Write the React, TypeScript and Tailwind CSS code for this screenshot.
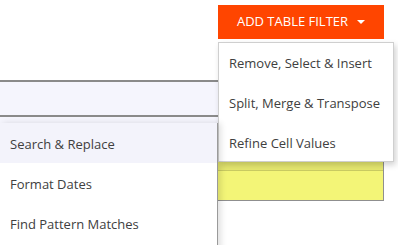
import React from 'react';

const tableMenu = ['Remove, Select & Insert', 'Split, Merge & Transpose', 'Refine Cell Values'];
const toolMenu = ['Search & Replace', 'Format Dates', 'Find Pattern Matches'];

export default function App() {
  return (
    <div className="relative w-[398px] h-[245px] overflow-hidden bg-white font-['Open_Sans',sans-serif] text-[13px] text-[#404040]">
      {/* base page */}
      <div className="h-[80px] pt-[5px] pl-[218px]">
        <button className="w-[166px] h-[34px] bg-[#ff4500] text-white text-[13px] flex items-center justify-center gap-[9px] uppercase">
          Add Table Filter
          <span className="w-0 h-0 border-l-[4px] border-r-[4px] border-t-[4px] border-l-transparent border-r-transparent border-t-white"></span>
        </button>
      </div>
      <div className="w-[384px] h-[37px] bg-[#f5f5fd] border-t-2 border-b-2 border-[#8a8a8a]"></div>
      <div className="w-[384px] h-[7px] bg-[#f5f5fd] border-b border-[#d6d6dc]"></div>
      <div className="h-[38px]"></div>
      <div className="ml-[217px] w-[167px] h-[39px] bg-[#f3f577] border-r border-b border-[#8f8f8f] flex flex-col">
        <div className="h-[9px] bg-[#e5e76f] border-b border-[#c9cb62]"></div>
      </div>

      {/* table filter dropdown */}
      <div className="absolute left-[218px] top-[42px] w-[176px] h-[120px] bg-white border border-[#cfcfcf] pt-[1px] shadow-[2px_3px_6px_rgba(0,0,0,0.18)] flex flex-col">
        {tableMenu.map((item) => (
          <div key={item} className="h-10 flex items-center pl-[10px] shrink-0">
            {item}
          </div>
        ))}
      </div>

      {/* left tool menu */}
      <div className="absolute left-0 top-[123px] w-[218px] h-[130px] bg-white border-r border-[#9a9a9a] shadow-[3px_0_6px_rgba(0,0,0,0.12)] flex flex-col">
        {toolMenu.map((item, i) => (
          <div key={item} className={`h-10 flex items-center pl-[10px] pt-[3px] shrink-0 ${i === 0 ? 'bg-[#f3f3fb]' : ''}`}>
            {item}
          </div>
        ))}
      </div>
    </div>
  );
}
